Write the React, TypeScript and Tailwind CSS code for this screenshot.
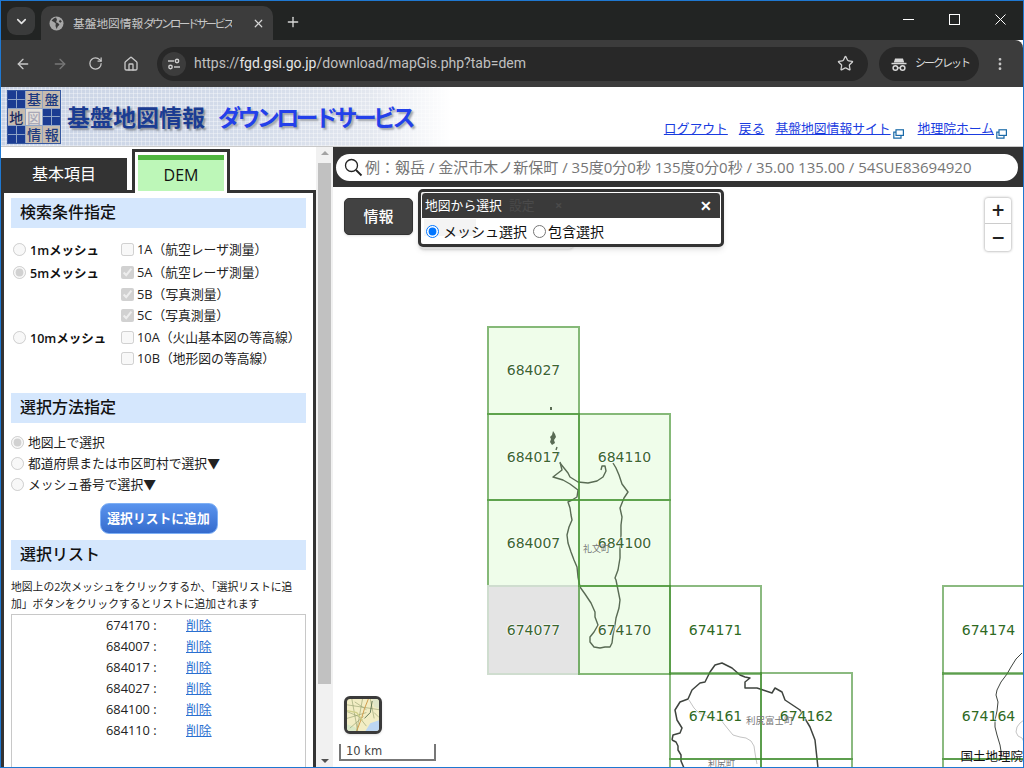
import React from "react";
import { ArrowLeft, ArrowRight, RotateCw, Home, Star, MoreVertical, X, Plus, ChevronDown } from "lucide-react";

const X_CELLS: [string, number, number, number, number, string][] = [
  ["684027", 488, 327, 93, 89, "sel"],
  ["684017", 488, 414, 93, 88, "sel"],
  ["684007", 488, 500, 93, 88, "sel"],
  ["674077", 488, 586, 93, 90, "gray"],
  ["684110", 579, 414, 93, 88, "sel"],
  ["684100", 579, 500, 93, 88, "sel"],
  ["674170", 579, 586, 93, 90, "sel"],
  ["674171", 670, 586, 93, 90, "off"],
  ["674161", 670, 673, 93, 88, "off"],
  ["674162", 761, 673, 93, 88, "off"],
  ["", 670, 759, 93, 30, "off"],
  ["", 761, 759, 93, 30, "off"],
  ["674174", 943, 586, 93, 90, "off"],
  ["674164", 943, 673, 93, 88, "off"],
  ["", 943, 759, 93, 30, "off"],
];

const LIST = ["674170", "684007", "684017", "684027", "684100", "684110"];

function SectionHead({ children }: { children: React.ReactNode }) {
  return (
    <div className="h-[30px] bg-[#d5e7fd] pl-[9px] text-[16px] leading-[29px] font-medium text-[#111]">{children}</div>
  );
}

function MeshRow({ radio, label, items }: { radio: boolean; label: string; items: { t: string; c: boolean; h: string }[] }) {
  return (
    <div className="flex">
      <div className="w-[110px] flex items-start pl-[2px] pt-[4px] gap-[4px] shrink-0">
        <input type="radio" disabled checked={radio} readOnly className="mt-0" />
        <span className="text-[12.5px] leading-[16px] font-semibold text-[#111] whitespace-nowrap">{label}</span>
      </div>
      <div className="flex flex-col">
        {items.map((i) => (
          <div key={i.t} className={`flex items-start gap-[3px] ${i.h}`}>
            <input type="checkbox" disabled checked={i.c} readOnly className="mt-[4px]" />
            <span className="text-[12.8px] leading-[20px] text-[#222] whitespace-nowrap">{i.t}</span>
          </div>
        ))}
      </div>
    </div>
  );
}

function ExtIcon() {
  return (
    <svg width="11" height="10" viewBox="0 0 11 10" className="inline-block ml-[2px] shrink-0" fill="none" stroke="#1a6aa8" strokeWidth="1.2">
      <rect x="3" y="0.8" width="7.4" height="5.6" />
      <path d="M3 3.2H0.8V9.2H8V6.4" />
    </svg>
  );
}

const BLUE = "bg-[#1b3c92] bg-[linear-gradient(#8fa4c6,#8fa4c6),linear-gradient(#8fa4c6,#8fa4c6)] bg-[length:100%_1px,1px_100%] bg-center bg-no-repeat";

export default function App() {
  return (
    <div className="w-[1024px] h-[768px] overflow-hidden flex flex-col border border-[#1f78d1] box-border font-['Open_Sans','Noto_Sans_CJK_JP',sans-serif] bg-white relative">
      {/* tab strip */}
      <div className="h-[39px] bg-[#222423] flex items-end shrink-0 relative">
        <div className="w-[28px] h-[28px] ml-[6px] mb-[5px] rounded-[9px] bg-[#3a3b3b] flex items-center justify-center text-[#e3e3e3]">
          <ChevronDown size={15} strokeWidth={2.6} />
        </div>
        <div className="w-[232px] h-[34px] ml-[6px] bg-[#3c3c3c] rounded-t-[10px] flex items-center pl-[8px] pr-[7px] gap-[9px] text-[#c7c7c7]">
          <svg width="15" height="15" viewBox="0 0 15 15" className="shrink-0">
            <circle cx="7.5" cy="7.5" r="7" fill="#a8a8a8" />
            <path d="M7 1.5C5 2 3.5 3.2 2.6 4.8L5 6l1.8 1.5L6.5 10l1.2 3 1-2.6 1.8-1.6L9 7 7 6.2 8 3.8z" fill="#3c3c3c" />
            <path d="M11 3.5l1.8 2-1.3 1.2-1.6-1z" fill="#3c3c3c" />
          </svg>
          <span className="text-[11.7px] whitespace-nowrap w-[159px] shrink-0 mt-[1px] overflow-hidden">
            基盤地図情報<span className="tracking-[-2.8px]">ダウンロードサービス</span>
          </span>
          <X size={13} strokeWidth={2.2} className="shrink-0 text-[#d5d5d5] ml-[11px]" />
        </div>
        <div className="ml-[12px] mb-[10px] text-[#d8d8d8]"><Plus size={16} strokeWidth={2} /></div>
        <div className="ml-auto flex items-center h-full pb-[2px] text-white">
          <div className="w-[46px] flex justify-center">
            <svg width="11" height="11" viewBox="0 0 11 11" stroke="#fff" fill="none"><path d="M0 5.5H11" /></svg>
          </div>
          <div className="w-[46px] flex justify-center">
            <svg width="11" height="11" viewBox="0 0 11 11" stroke="#fff" fill="none"><rect x="0.5" y="0.5" width="10" height="10" /></svg>
          </div>
          <div className="w-[46px] flex justify-center">
            <svg width="11" height="11" viewBox="0 0 11 11" stroke="#fff" fill="none"><path d="M0.5 0.5L10.5 10.5M10.5 0.5L0.5 10.5" /></svg>
          </div>
        </div>
      </div>
      {/* toolbar */}
      <div className="h-[47px] bg-[#3c3c3c] rounded-tr-[8px] flex items-center shrink-0 text-[#c7c7c7]">
        <div className="w-[46px] pl-[14px]"><ArrowLeft size={16} strokeWidth={2} /></div>
        <div className="w-[36px] pl-[5px] text-[#777]"><ArrowRight size={16} strokeWidth={2} /></div>
        <div className="w-[36px] pl-[5px]"><RotateCw size={15} strokeWidth={2} /></div>
        <div className="w-[38px] pl-[4px]"><Home size={16} strokeWidth={2} /></div>
        <div className="w-[711px] h-[34px] bg-[#282828] rounded-full flex items-center pl-[5px] pr-[14px]">
          <div className="w-[24px] h-[24px] rounded-full bg-[#3c3c3c] flex items-center justify-center shrink-0">
            <svg width="14" height="12" viewBox="0 0 14 12" fill="none" stroke="#d0d0d0" strokeWidth="1.4">
              <path d="M1 3H7" />
              <circle cx="10" cy="3" r="1.7" />
              <circle cx="3.5" cy="9" r="1.7" />
              <path d="M7 9H13" />
            </svg>
          </div>
          <span className="ml-[8px] text-[14px] text-[#c0c0c0] whitespace-nowrap flex-1 font-['Roboto','Noto_Sans_CJK_JP',sans-serif]">
            https://<span className="text-[#e6e6e6]">fgd.gsi.go.jp</span>/download/mapGis.php?tab=dem
          </span>
          <Star size={17} strokeWidth={1.8} className="text-[#d0d0d0]" />
        </div>
        <div className="w-[100px] h-[34px] ml-[11px] bg-[#282828] rounded-full flex items-center pl-[12px] gap-[8px]">
          <svg width="16" height="16" viewBox="0 0 16 16" fill="#d8d8d8">
            <path d="M4 2.5h8l1.2 4H2.8z" />
            <rect x="0.5" y="6.8" width="15" height="1.5" />
            <circle cx="4.4" cy="12" r="2.3" fill="none" stroke="#d8d8d8" strokeWidth="1.5" />
            <circle cx="11.6" cy="12" r="2.3" fill="none" stroke="#d8d8d8" strokeWidth="1.5" />
            <rect x="6.6" y="11.3" width="2.8" height="1.2" />
          </svg>
          <span className="text-[11px] text-[#dcdcdc] tracking-[-2px] whitespace-nowrap">シークレット</span>
        </div>
        <div className="ml-[13px] text-[#c7c7c7]"><MoreVertical size={16} strokeWidth={2.2} /></div>
      </div>
      {/* site header */}
      <div className="h-[60px] shrink-0 relative flex border-b border-[#c9c9c9] bg-[linear-gradient(90deg,#c9d3e5_0%,#d4dcea_25%,#e3e7ef_36%,#ffffff_44%)]">
        <div className="absolute inset-0 w-[450px] bg-[repeating-linear-gradient(90deg,rgba(255,255,255,.35)_0_1px,transparent_1px_4px),repeating-linear-gradient(0deg,rgba(255,255,255,.35)_0_1px,transparent_1px_4px)]" />
        <div className="relative ml-[6px] mt-[3px] w-[54px] h-[54px] grid grid-cols-3 grid-rows-3 gap-[1px] bg-[#8fa4c6] border border-[#3658a0] text-[14px] font-medium text-[#1c3a80] text-center leading-[17px] shrink-0">
          <div className={BLUE} />
          <div className="bg-[#c6bbae]">基</div>
          <div className="bg-[#c6bbae]">盤</div>
          <div className="bg-[#c6bbae] text-[#1a2a60]">地</div>
          <div className="bg-[#e6e2dc] text-[#a9a9b8]">図</div>
          <div className={BLUE} />
          <div className={BLUE} />
          <div className="bg-[#c6bbae]">情</div>
          <div className="bg-[#c6bbae]">報</div>
        </div>
        <div className="relative ml-[6px] mt-[16px] h-[30px] text-[23px] leading-[28px] font-bold text-[#1b3c92] whitespace-nowrap [text-shadow:2px_2px_2px_#8a8f99]">基盤地図情報</div>
        <div className="relative ml-[13px] mt-[16px] h-[30px] text-[23px] leading-[28px] font-bold tracking-[-3.6px] text-[#2340ea] whitespace-nowrap [text-shadow:2px_2px_2px_#a0a4ac]">ダウンロードサービス</div>
        <div className="relative ml-auto mr-[16px] mt-[32px] flex items-start text-[12.8px] leading-[18px] text-[#1a3ce0] whitespace-nowrap">
          <a className="underline">ログアウト</a>
          <a className="underline ml-[11px]">戻る</a>
          <a className="underline ml-[11px]">基盤地図情報サイト</a>
          <span className="mt-[4px]"><ExtIcon /></span>
          <a className="underline ml-[14px]">地理院ホーム</a>
          <span className="mt-[4px]"><ExtIcon /></span>
        </div>
      </div>
      {/* body */}
      <div className="flex-1 flex min-h-0 relative">
        {/* left side */}
        <div className="w-[315px] shrink-0 flex flex-col">
          <div className="h-[43px] flex items-end pl-0 shrink-0 relative z-10">
            <div className="w-[126px] h-[33px] bg-[#333333] text-white text-[16px] leading-[33px] text-center mb-[-1px]">基本項目</div>
            <div className="ml-[5px] w-[98px] h-[44px] border-[3px] border-b-0 border-[#333333] bg-white px-[3px] pt-[3px] mb-[-3px]">
              <div className="h-[36px] bg-[#bdf7b8] border-t-[5px] border-[#50b640] text-center text-[16px] leading-[31px] font-medium text-[#111]">DEM</div>
            </div>
          </div>
          <div className="flex-1 min-h-0 border-t-[3px] border-r-[3px] border-l-[3px] border-[#333333] ml-0 pl-[7px] pr-[7px] pt-[5px] overflow-hidden">
            <SectionHead>検索条件指定</SectionHead>
            <div className="mt-[11px] flex flex-col">
              <MeshRow radio={false} label="1mメッシュ" items={[{ t: "1A（航空レーザ測量）", c: false, h: "h-[23px]" }]} />
              <MeshRow radio={true} label="5mメッシュ" items={[
                { t: "5A（航空レーザ測量）", c: true, h: "h-[22px]" },
                { t: "5B（写真測量）", c: true, h: "h-[21px]" },
                { t: "5C（写真測量）", c: true, h: "h-[22px]" },
              ]} />
              <MeshRow radio={false} label="10mメッシュ" items={[
                { t: "10A（火山基本図の等高線）", c: false, h: "h-[21px]" },
                { t: "10B（地形図の等高線）", c: false, h: "h-[20px]" },
              ]} />
            </div>
            <div className="mt-[25px]"><SectionHead>選択方法指定</SectionHead></div>
            <div className="mt-[9px] flex flex-col">
              {[["地図上で選択", true], ["都道府県または市区町村で選択▼", false], ["メッシュ番号で選択▼", false]].map(([t, c]) => (
                <label key={t as string} className="h-[21px] flex items-center gap-[4px] text-[12.8px] text-[#222] whitespace-nowrap">
                  <input type="radio" disabled checked={c as boolean} readOnly />
                  {t as string}
                </label>
              ))}
            </div>
            <div className="mt-[8px] flex justify-center">
              <div className="w-[118px] h-[31px] rounded-[9px] border border-[#7fb0f5] bg-[linear-gradient(#5a94ee,#356bcd)] text-white text-[12.8px] font-bold leading-[29px] text-center whitespace-nowrap">選択リストに追加</div>
            </div>
            <div className="mt-[6px]"><SectionHead>選択リスト</SectionHead></div>
            <div className="mt-[9px] text-[10.8px] leading-[16.5px] text-[#222] h-[35px] whitespace-nowrap">
              地図上の2次メッシュをクリックするか、「選択リストに追<br />加」ボタンをクリックするとリストに追加されます
            </div>
            <div className="h-[160px] border border-[#c8c8c8] flex flex-col items-start">
              {LIST.map((n) => (
                <div key={n} className="h-[21px] flex items-center text-[12.8px] text-[#222] pl-[94px]">
                  <span className="w-[80px]">{n} :</span>
                  <a className="underline text-[#2a6fd0]">削除</a>
                </div>
              ))}
            </div>
          </div>
        </div>
        {/* scrollbar */}
        <div className="w-[17px] shrink-0 bg-[#f1f1f1] flex flex-col items-center relative">
          <div className="mt-[4px] w-0 h-0 border-x-[4px] border-x-transparent border-b-[4px] border-b-[#a3a3a3]" />
          <div className="w-[13px] h-[521px] mt-[8px] bg-[#c1c1c1]" />
          <div className="mt-auto mb-[4px] w-0 h-0 border-x-[4px] border-x-transparent border-t-[4px] border-t-[#505050]" />
        </div>
        {/* map */}
        <div className="flex-1 min-w-0 relative overflow-hidden bg-white">
          <svg className="absolute inset-0" width="691" height="621" viewBox="333 147 691 621" fill="none" stroke="#3f443f" strokeWidth="1.4" strokeLinejoin="round">
            <path d="M551 407v3" strokeWidth="2" />
            <path d="M553 431l2 3 1 3-2 3 1 3-3 2-2-3 1-3-1-2 2-2z" fill="#3f443f" stroke="none" />
            <path d="M557 447l-1 3M559 452l-1 4" />
            <path d="M560 462L562 470L553 477L563 480L570 484L578 490L577 497L572 500L568 502L570 508L571 515L572 520L569 527L567 535L568 543L571 552L574 560L577 567L578 577L580 587L585 594L591 603L595 612L595 617L598 625L594 632L590 637L590 642L594 647L600 648L605 647L610 647L612 643L613 635L615 625L616 618L619 608L620 600L618 590L616 580L615 578L618 570L620 558L620 547L621 535L621 525L622 517L620 508L624 498L628 492L622 484L619 475L616 468L613 463" />
            <path d="M560 463L564 468L568 473L570 477L578 482L588 483L597 481L603 477L606 471L605 466L602 466L601 470" />
            <path d="M672 740L673 735L680 733L682 728L677 720L675 710L680 702L688 699L692 690L700 683L705 682L710 672L715 665L722 663L732 668L740 675L745 677L750 678L745 682L745 688L757 688L763 690L772 693L775 688L782 692L785 700L800 710L810 727L815 740L818 768" strokeWidth="1.5" />
            <path d="M672 740L676 742L678 746L678 750L681 755L681 761L684 768" strokeWidth="1.5" />
            <path d="M1022 653l-6 6-5 8-4 7-6 8-4 8-1 5 2 7-1 9-2 9 0 7 2 8 3 10 2 12" strokeWidth="1" />
            <path d="M689 700l5 8 5 5 8 3 8 3 6 1 3 4 4 5 5 6 7 2 6 1 5 3 3 5 1 7 1 6 1 5" stroke="#c4c4c4" strokeWidth="1" />
            <path d="M1024 720l-4 3-3 4-1 5 2 4 4 2 2 4" stroke="#c4c4c4" strokeWidth="1" />
          </svg>
          {X_CELLS.map(([n, x, y, w, h, k]) => (
            <div
              key={`${n}${x}${y}`}
              style={{ left: x - 334, top: y - 148, width: w, height: h }}
              className={`absolute border-2 flex items-center justify-center font-['DejaVu_Sans',sans-serif] text-[14px] [text-shadow:0_0_2px_#fff,0_0_2px_#fff,0_0_2px_#fff] ${
                k === "sel"
                  ? "border-[rgba(62,140,44,0.6)] bg-[rgba(180,245,160,0.22)] text-[#3b6630]"
                  : k === "gray"
                  ? "border-[rgba(190,215,190,0.55)] bg-[#e4e4e4] text-[#3b6630]"
                  : "border-[rgba(62,140,44,0.6)] text-[#2f6a1f]"
              }`}
            >
              {n}
            </div>
          ))}
          <span className="absolute left-[250px] top-[395px] text-[9px] text-[#777] whitespace-nowrap">礼文町</span>
          <span className="absolute left-[413px] top-[567px] text-[9.5px] text-[#777] whitespace-nowrap">利尻富士町</span>
          <span className="absolute left-[375px] top-[610px] text-[9px] text-[#777] whitespace-nowrap">利尻町</span>
          <span className="absolute right-0 bottom-[2px] text-[12.5px] leading-[16px] text-[#111] whitespace-nowrap">国土地理院</span>

          {/* search bar */}
          <div className="absolute left-0 right-0 top-0 h-[40px] bg-[#333333] pl-[3px] pr-[5px] pt-[7px]">
            <div className="h-[27px] bg-white rounded-full flex items-center pl-[8px] gap-[2px]">
              <svg width="19" height="19" viewBox="0 0 19 19" fill="none" stroke="#222" strokeWidth="1.3" className="shrink-0">
                <circle cx="7.5" cy="7.5" r="6" />
                <path d="M12 12l5.5 5.5" strokeWidth="1.8" />
              </svg>
              <span className="text-[15px] text-[#767676] whitespace-nowrap">例：剱岳 / 金沢市木ノ新保町 / 35度0分0秒 135度0分0秒 / 35.00 135.00 / 54SUE83694920</span>
            </div>
          </div>

          {/* info button */}
          <div className="absolute left-[11px] top-[51px] w-[69px] h-[37px] rounded-[5px] bg-[#424242] border border-[#333] text-white text-[15px] font-medium leading-[35px] text-center shadow">情報</div>

          {/* ghost panel under the popup */}
          <div className="absolute left-[86px] top-[44px] w-[155px] h-[58px] rounded-[5px] bg-[#f4f4f4] shadow" />

          {/* popup */}
          <div className="absolute left-[85px] top-[42px] w-[306px] h-[58px] rounded-[5px] border-[3px] border-[#333333] bg-white shadow-md">
            <div className="h-[27px] relative bg-[#3a3a3a] border border-white rounded-t-[4px] flex items-center pl-[3px] pr-[8px] text-white text-[12.8px]">
              <span className="flex-1">地図から選択</span>
              <span className="absolute left-[87px] text-[#4a4a4a]">設定</span>
              <span className="absolute left-[133px] text-[#4a4a4a] font-bold">×</span>
              <span className="font-bold text-[14px] leading-none">✕</span>
            </div>
            <div className="h-[25px] relative flex items-center pl-[5px] text-[14px] text-[#111] whitespace-nowrap">
              <div className="absolute left-[3px] top-0 w-[52px] h-[17px] bg-[#f4f4f4]" />
              <input type="radio" defaultChecked name="mode" className="relative w-[13px] h-[13px] mr-[4px]" />
              <span className="relative">メッシュ選択</span>
              <input type="radio" name="mode" className="w-[13px] h-[13px] ml-[6px] mr-[2px]" />
              <span>包含選択</span>
            </div>
          </div>

          {/* zoom */}
          <div className="absolute left-[652px] top-[51px] w-[26px] h-[53px] bg-white rounded-[3px] shadow-[0_0_3px_rgba(0,0,0,.45)] flex flex-col font-['DejaVu_Sans',sans-serif] text-[#222] font-bold text-[17px]">
            <div className="h-[26px] flex items-center justify-center border-b border-[#ccc]">+</div>
            <div className="flex-1 flex items-center justify-center">−</div>
          </div>

          {/* basemap */}
          <div className="absolute left-[11px] top-[549px] w-[38px] h-[38px] rounded-[6px] border-[3px] border-[#3a3a3a] overflow-hidden bg-[#f2edc4] shadow">
            <svg width="32" height="32" viewBox="0 0 33 33" fill="none">
              <path d="M19 33l5-8 9-3v11z" fill="#bcd6f2" />
              <path d="M0 26l8 3 4 4H0z" fill="#d9e8c6" />
              <path d="M26 0l7 0 0 10-5-2z" fill="#dfe6c8" />
              <path d="M0 6l33 5M5 0l6 33M16 0l-6 33M0 20l20-6M24 0l4 20M0 13l12 5 8 10M3 30l14-12M8 3l12 8M28 14l5 5" stroke="#8f9a6a" strokeWidth=".6" />
              <path d="M22 0l-4 10-3 10-5 13" stroke="#d09a4a" strokeWidth="1" />
              <path d="M26 2l-2 12-6 6" stroke="#4f6a4a" strokeWidth=".9" />
              <path d="M0 12l10 2 6 8" stroke="#cfcf8a" strokeWidth="1.4" />
            </svg>
          </div>

          {/* scale */}
          <div className="absolute left-[6px] top-[597px] w-[97px] h-[17px] border-2 border-t-0 border-[#777] text-[11.5px] leading-[15px] pl-[5px] text-[#444] font-['DejaVu_Sans',sans-serif]">10 km</div>
        </div>
      </div>
    </div>
  );
}
